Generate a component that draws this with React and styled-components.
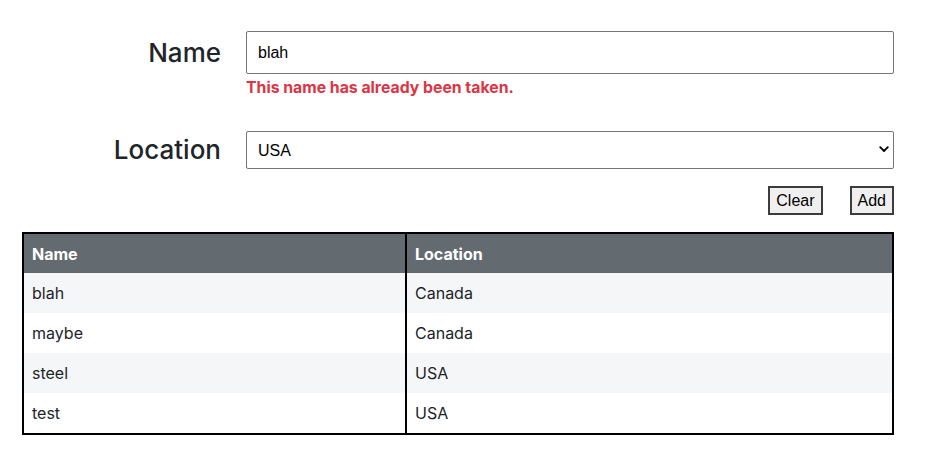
import React, { useState } from 'react';
import styled, { createGlobalStyle } from 'styled-components';

const GlobalStyle = createGlobalStyle`
  body {
    margin: 0;
    background: #fff;
    font-family: Inter, "Liberation Sans", sans-serif;
    color: #212529;
  }
`;

const Page = styled.div`
  width: 872px;
  padding: 31px 0 0 22px;
`;

const Form = styled.form`
  display: grid;
  grid-template-columns: 199px 1fr;
  column-gap: 25px;
`;

const Label = styled.label`
  text-align: right;
  font-size: 26px;
  font-weight: 500;
  line-height: ${({ $h }) => $h || 43}px;
  color: #212529;
`;

const Field = styled.div`
  display: flex;
  flex-direction: column;
  margin-bottom: ${({ $space }) => $space || 0}px;
`;

const TextInput = styled.input`
  box-sizing: border-box;
  height: 43px;
  width: 100%;
  border: 1px solid #767676;
  border-radius: 2px;
  padding: 0 11px;
  font-family: "Liberation Sans", Arial, sans-serif;
  font-size: 16px;
  color: #000;
  outline: none;
`;

const ErrorText = styled.div`
  margin-top: 5px;
  font-size: 15.8px;
  font-weight: 700;
  color: #dc3545;
  line-height: 18px;
`;

const SelectWrap = styled.div`
  position: relative;
`;

const Select = styled.select`
  box-sizing: border-box;
  appearance: none;
  width: 100%;
  height: 38px;
  border: 1px solid #767676;
  border-radius: 2px;
  background: #fff;
  padding: 0 11px;
  font-family: "Liberation Sans", Arial, sans-serif;
  font-size: 16px;
  color: #000;
  outline: none;
`;

const Chevron = styled.svg`
  position: absolute;
  right: 5px;
  top: 15px;
  pointer-events: none;
`;

const Actions = styled.div`
  grid-column: 1 / -1;
  display: flex;
  justify-content: flex-end;
  gap: 27px;
  margin: 17px 0;
`;

const Button = styled.button`
  box-sizing: border-box;
  height: 29px;
  padding: 0 6px;
  background: #efefef;
  border: 2px solid #3c3c3c;
  border-radius: 0;
  font-family: "Liberation Sans", Arial, sans-serif;
  font-size: 16px;
  color: #000;
`;

const Table = styled.table`
  width: 872px;
  border-collapse: collapse;
  border: 2px solid #000;
  font-size: 16px;
`;

const Th = styled.th`
  text-align: left;
  background: #636b71;
  color: #fff;
  font-weight: 700;
  height: 40px;
  padding: 0 8px;
  border-right: 2px solid #000;
  box-sizing: border-box;
  &:last-child { border-right: none; }
`;

const Row = styled.tr`
  background: ${({ $striped }) => ($striped ? '#f5f6f7' : '#fff')};
`;

const Td = styled.td`
  height: 40px;
  padding: 0 8px;
  color: #212529;
  border-right: 2px solid #000;
  &:last-child { border-right: none; }
`;

const rows = [
  { name: 'blah', location: 'Canada' },
  { name: 'maybe', location: 'Canada' },
  { name: 'steel', location: 'USA' },
  { name: 'test', location: 'USA' },
];

export default function App() {
  const [name, setName] = useState('blah');
  const [location, setLocation] = useState('USA');

  return (
    <Page>
      <GlobalStyle />
      <Form onSubmit={(e) => e.preventDefault()}>
        <Label htmlFor="name">Name</Label>
        <Field $space={34}>
          <TextInput id="name" value={name} onChange={(e) => setName(e.target.value)} />
          <ErrorText>This name has already been taken.</ErrorText>
        </Field>
        <Label htmlFor="location" $h={38}>Location</Label>
        <Field>
          <SelectWrap>
            <Select id="location" value={location} onChange={(e) => setLocation(e.target.value)}>
              <option>USA</option>
              <option>Canada</option>
            </Select>
            <Chevron width="10" height="7" viewBox="0 0 10 7">
              <path d="M1.2 1.2 L5 5 L8.8 1.2" fill="none" stroke="#000" strokeWidth="1.8" strokeLinecap="round" strokeLinejoin="round" />
            </Chevron>
          </SelectWrap>
        </Field>
        <Actions>
          <Button type="button">Clear</Button>
          <Button type="submit">Add</Button>
        </Actions>
      </Form>
      <Table>
        <thead>
          <tr>
            <Th style={{ width: '383px' }}>Name</Th>
            <Th>Location</Th>
          </tr>
        </thead>
        <tbody>
          {rows.map((r, i) => (
            <Row key={r.name} $striped={i % 2 === 0}>
              <Td>{r.name}</Td>
              <Td>{r.location}</Td>
            </Row>
          ))}
        </tbody>
      </Table>
    </Page>
  );
}
